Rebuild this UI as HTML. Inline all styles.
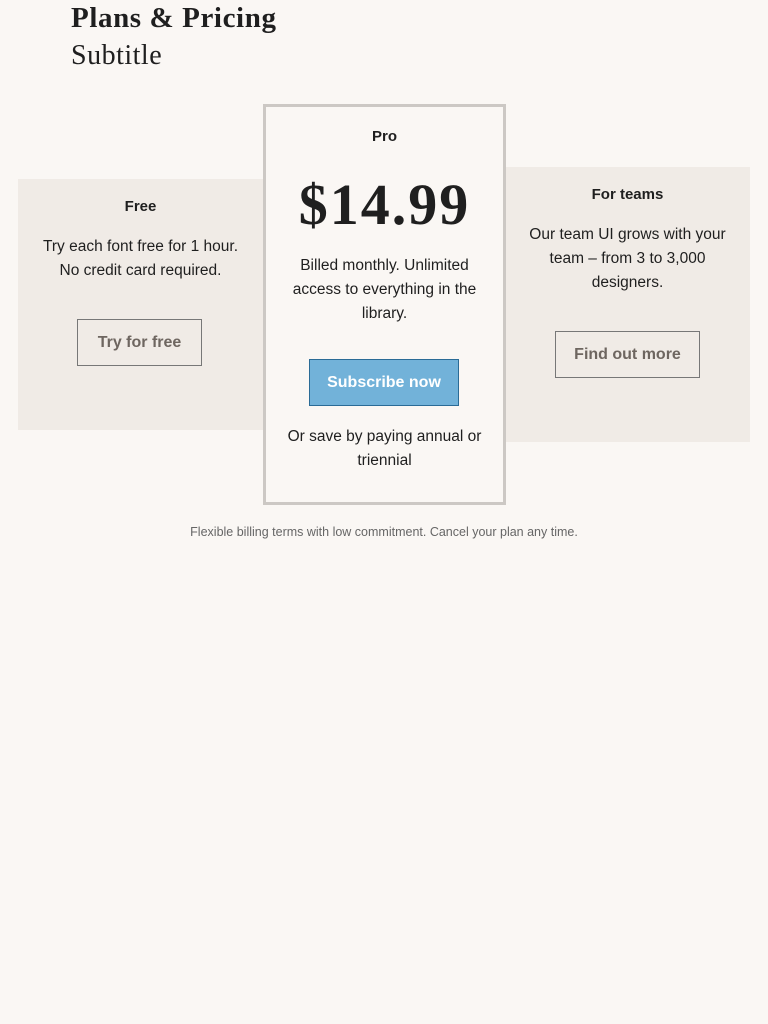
<!DOCTYPE html>
<html><head><meta charset="utf-8"><style>
body{margin:0;background:#faf7f4;width:768px;height:1024px;position:relative;font-family:"Liberation Sans",sans-serif;color:#1f1f1f;overflow:hidden}
.a{position:absolute}
h1{position:absolute;left:71px;top:2px;margin:0;font:bold 29px/32px "Liberation Serif",serif;letter-spacing:0.6px}
h2{position:absolute;left:71px;top:40px;margin:0;font:normal 28px/32px "Liberation Serif",serif;letter-spacing:0.5px}
.card{position:absolute;text-align:center;box-sizing:border-box}
.t{font-weight:bold;font-size:15px}
p{margin:0;font-size:15.5px;line-height:24px}
.btn{position:absolute;box-sizing:border-box;border:1px solid #777;color:#6e6660;font-weight:bold;font-size:16px;text-align:center}
</style></head><body>
<h1>Plans &amp; Pricing</h1>
<h2>Subtitle</h2>
<div class="card" style="left:18px;top:179px;width:245px;height:251px;background:#f0ebe6">
 <div class="a t" style="left:0;right:0;top:19px">Free</div>
 <p class="a" style="left:0;right:0;top:56px">Try each font free for 1 hour.<br>No credit card required.</p>
 <div class="btn" style="left:59px;top:140px;width:125px;height:47px;line-height:45px">Try for free</div>
</div>
<div class="card" style="left:505px;top:167px;width:245px;height:275px;background:#f0ebe6">
 <div class="a t" style="left:0;right:0;top:19px">For teams</div>
 <p class="a" style="left:14px;right:14px;top:56px">Our team UI grows with your team – from 3 to 3,000 designers.</p>
 <div class="btn" style="left:50px;top:164px;width:145px;height:47px;line-height:45px">Find out more</div>
</div>
<div class="card" style="left:263px;top:104px;width:243px;height:401px;border:3px solid #ccc8c4;background:#faf7f4">
 <div class="a t" style="left:0;right:0;top:21px">Pro</div>
 <div class="a" style="left:0;right:0;top:66px;font:bold 58px/64px 'Liberation Serif',serif;letter-spacing:2px">$14.99</div>
 <p class="a" style="left:20px;right:20px;top:147px">Billed monthly. Unlimited access to everything in the library.</p>
 <div class="btn" style="left:43px;top:252px;width:150px;height:47px;line-height:45px;background:#72b2d9;border-color:#2a6b96;color:#fff">Subscribe now</div>
 <p class="a" style="left:15px;right:15px;top:318px">Or save by paying annual or triennial</p>
</div>
<div class="a" style="left:0;right:0;top:525px;text-align:center;font-size:12.5px;color:#666">Flexible billing terms with low commitment. Cancel your plan any time.</div>
</body></html>
